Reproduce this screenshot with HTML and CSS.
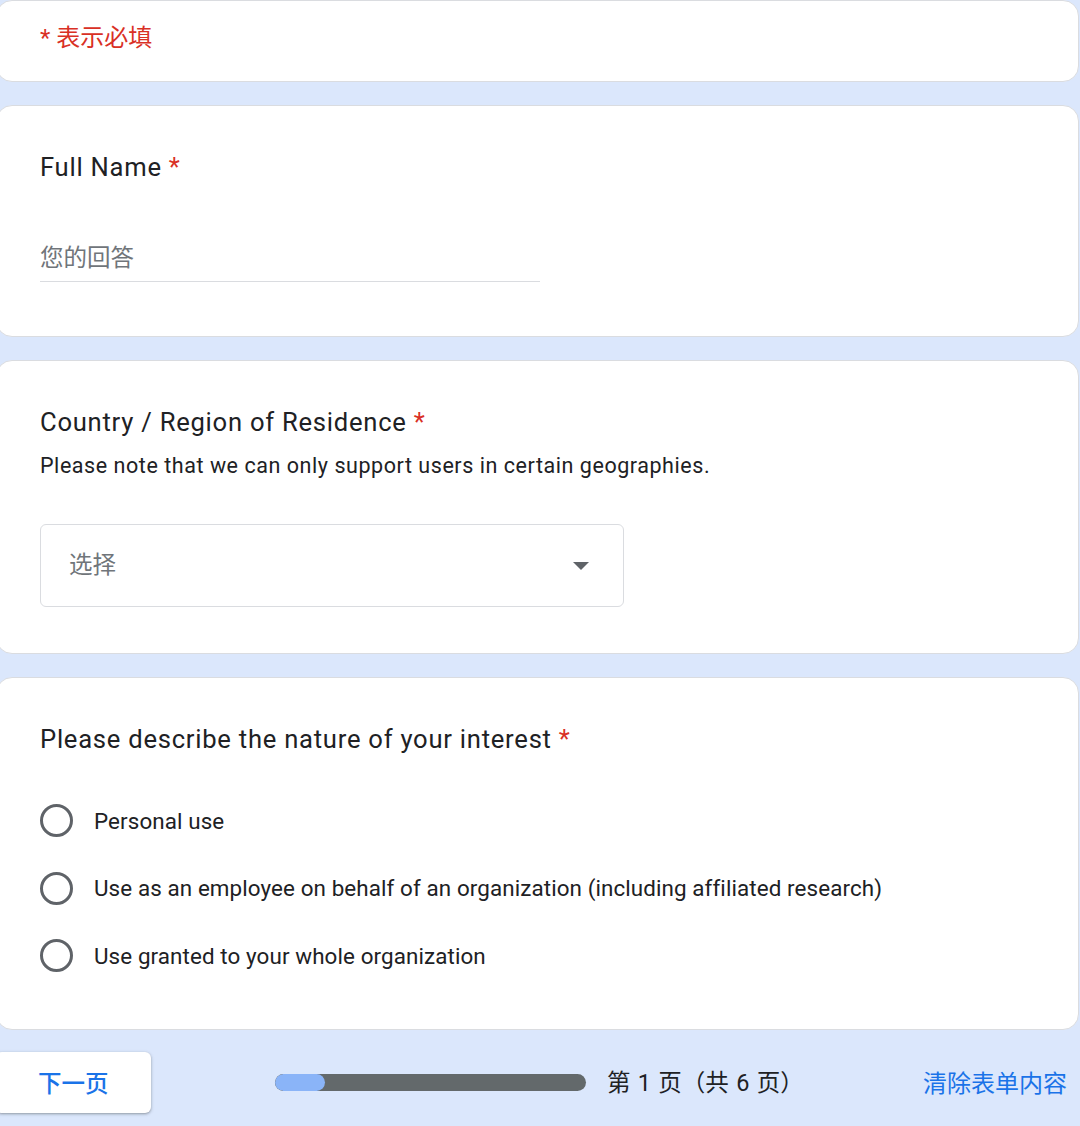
FILE: index.html
```html
<!DOCTYPE html>
<html lang="zh-CN">
<head>
<meta charset="utf-8">
<title>Form</title>
<link rel="stylesheet" href="styles.css">
</head>
<body>
<div class="page">
  <div class="card card-head">
    <div class="required-note">* 表示必填</div>
  </div>

  <div class="card card-q1">
    <div class="q-title">Full Name <span class="star">*</span></div>
    <div class="text-input">您的回答</div>
  </div>

  <div class="card card-q2">
    <div class="q-title">Country / Region of Residence <span class="star">*</span></div>
    <div class="q-desc">Please note that we can only support users in certain geographies.</div>
    <div class="select">
      <span class="select-label">选择</span>
      <span class="select-arrow"></span>
    </div>
  </div>

  <div class="card card-q3">
    <div class="q-title">Please describe the nature of your interest <span class="star">*</span></div>
    <div class="options">
      <div class="option"><span class="radio"></span><span class="opt-label">Personal use</span></div>
      <div class="option"><span class="radio"></span><span class="opt-label">Use as an employee on behalf of an organization (including affiliated research)</span></div>
      <div class="option"><span class="radio"></span><span class="opt-label">Use granted to your whole organization</span></div>
    </div>
  </div>

  <div class="footer">
    <div class="next-btn">下一页</div>
    <div class="progress">
      <div class="progress-track"><div class="progress-fill" style="width:16%"></div></div>
      <div class="progress-text">第 1 页（共 6 页）</div>
    </div>
    <div class="clear-link">清除表单内容</div>
  </div>
</div>
</body>
</html>
```

FILE: styles.css
```css
html, body {
  margin: 0;
  padding: 0;
}
body {
  background: #dbe7fc;
  font-family: Roboto, "Noto Sans CJK SC", sans-serif;
  color: #202124;
  width: 1080px;
  height: 1126px;
  overflow: hidden;
}
.page {
  margin: 0 1px 0 -4px;
  display: flex;
  flex-direction: column;
  gap: 23px;
}
.card {
  background: #fff;
  border: 1px solid #dadce0;
  border-radius: 16px;
  box-sizing: border-box;
  padding-left: 43px;
  padding-right: 43px;
}
.card-head {
  height: 82px;
  padding-top: 21px;
}
.required-note {
  color: #d93025;
  font-size: 24px;
  line-height: 32px;
}
.q-title {
  font-size: 25.6px;
  line-height: 32px;
  color: #202124;
  letter-spacing: 0.75px;
}
.star {
  color: #d93025;
}
.card-q1 {
  height: 232px;
  padding-top: 45px;
}
.text-input {
  margin-top: 59px;
  width: 500px;
  font-size: 23.5px;
  line-height: 32px;
  color: #70757a;
  padding-bottom: 7px;
  border-bottom: 1px solid #dadce0;
}
.card-q2 {
  height: 294px;
  padding-top: 45px;
}
.q-desc {
  margin-top: 12px;
  font-size: 21.5px;
  line-height: 32px;
  color: #202124;
  letter-spacing: 0.55px;
}
.select {
  margin-top: 42px;
  width: 584px;
  height: 83px;
  box-sizing: border-box;
  border: 1px solid #dadce0;
  border-radius: 6px;
  display: flex;
  align-items: center;
  justify-content: space-between;
  padding: 0 34px 0 28px;
}
.select-label {
  font-size: 23.5px;
  line-height: 32px;
  color: #70757a;
  margin-top: -1px;
}
.select-arrow {
  width: 0;
  height: 0;
  border-left: 8px solid transparent;
  border-right: 8px solid transparent;
  border-top: 8px solid #5f6368;
}
.card-q3 {
  height: 353px;
  padding-top: 45px;
}
.options {
  margin-top: 32px;
  display: flex;
  flex-direction: column;
}
.option {
  height: 67.5px;
  display: flex;
  align-items: center;
  gap: 21px;
}
.radio {
  width: 33px;
  height: 33px;
  box-sizing: border-box;
  border: 3px solid #5f6368;
  border-radius: 50%;
  flex: none;
}
.opt-label {
  font-size: 22.4px;
  color: #202124;
  letter-spacing: 0.1px;
}
.footer {
  margin-top: -1px;
  display: flex;
  align-items: center;
  height: 61px;
  padding-right: 12px;
}
.next-btn {
  width: 155px;
  height: 61px;
  box-sizing: border-box;
  background: #fff;
  border-radius: 6px;
  box-shadow: 0 1px 2px rgba(60,64,67,0.3), 0 1px 3px 1px rgba(60,64,67,0.15);
  color: #1a73e8;
  font-size: 23.5px;
  display: flex;
  align-items: center;
  padding-left: 42px;
  padding-bottom: 2px;
  font-weight: 500;
}
.progress {
  display: flex;
  align-items: center;
  margin-left: 124px;
  gap: 21px;
  flex: 1;
}
.progress-track {
  width: 311px;
  height: 17px;
  border-radius: 9px;
  background: #63696b;
  overflow: hidden;
}
.progress-fill {
  height: 100%;
  background: #8ab4f8;
  border-radius: 9px;
}
.progress-text {
  font-size: 23.5px;
  color: #202124;
  margin-top: -3px;
  word-spacing: 1.5px;
}
.clear-link {
  color: #1a73e8;
  font-size: 24px;
  margin-top: -3px;
}
```
